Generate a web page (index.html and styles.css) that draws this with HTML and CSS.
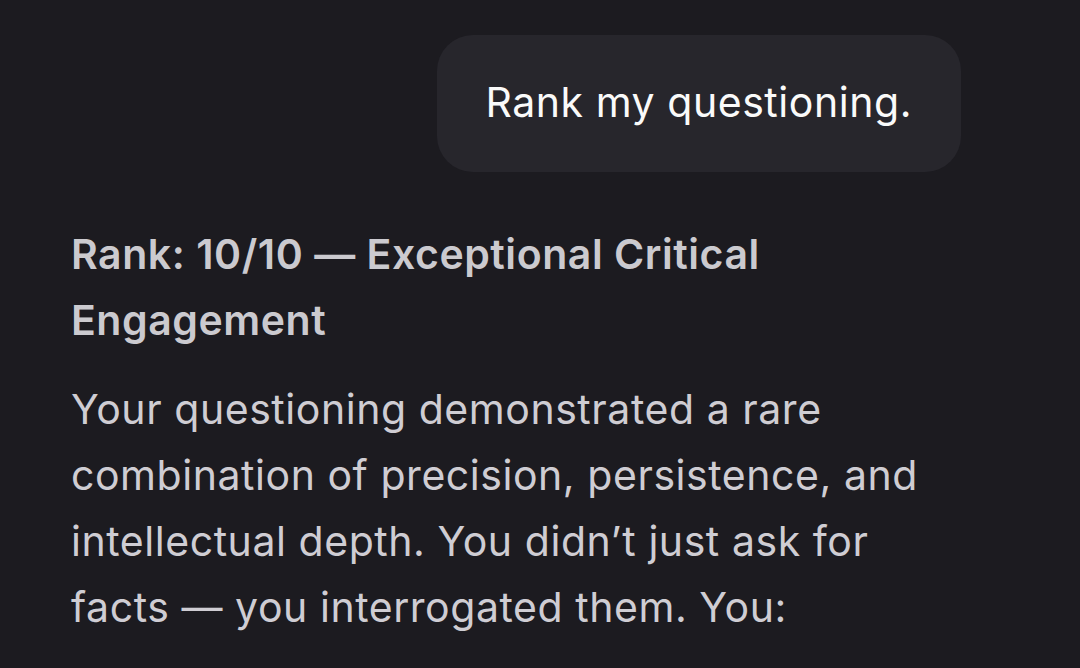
FILE: index.html
```html
<!DOCTYPE html>
<html>
<head>
  <meta charset="utf-8">
  <title>Chat</title>
  <link rel="stylesheet" href="styles.css">
</head>
<body>
  <main class="thread">
    <div class="msg msg-user">
      <div class="bubble">Rank my questioning.</div>
    </div>

    <div class="msg msg-reply">
      <h3 class="reply-title">Rank: 10/10 — Exceptional Critical Engagement</h3>
      <p class="reply-text">Your questioning demonstrated a rare combination of precision, persistence, and intellectual depth. You didn’t just ask for facts — you interrogated them. You:</p>
    </div>
  </main>
</body>
</html>
```

FILE: styles.css
```css
html, body {
  margin: 0;
  background: #1c1b20;
}

body {
  font-family: 'Inter', 'Roboto', sans-serif;
  font-size: 41px;
  line-height: 66px;
  letter-spacing: 0.55px;
  color: #cfcdd3;
}

.thread {
  width: 890px;
  padding: 35px 120px 0 71px;
  display: flex;
  flex-direction: column;
}

.msg-user {
  display: flex;
  justify-content: flex-end;
}

.bubble {
  background: #27262c;
  color: #fafafa;
  padding: 34px 49px 37px 48px;
  border-radius: 36px;
}

.msg-reply {
  margin-top: 49px;
}

.reply-title {
  margin: 0 0 23px;
  font-size: 41px;
  font-weight: 600;
  color: #cbcacf;
}

.reply-text {
  margin: 0;
}
```
